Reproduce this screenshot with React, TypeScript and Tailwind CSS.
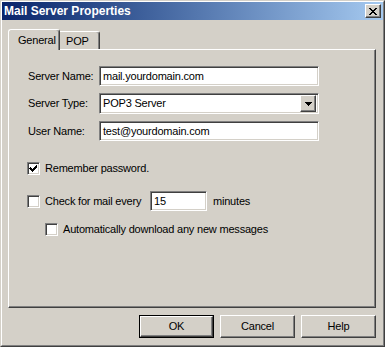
import React from "react";

const sunken =
  "border border-t-[#808080] border-l-[#808080] border-b-white border-r-white shadow-[inset_1px_1px_0_#404040,inset_-1px_-1px_0_#d4d0c8] bg-white";
const raised =
  "border border-t-white border-l-white border-b-[#404040] border-r-[#404040] shadow-[inset_-1px_-1px_0_#808080] bg-[#d4d0c8]";

function CheckBox({ checked }: { checked?: boolean }) {
  return (
    <div className={`w-[13px] h-[13px] shrink-0 ${sunken} flex items-center justify-center`}>
      {checked && (
        <svg width="9" height="9" viewBox="0 0 9 9" shapeRendering="crispEdges">
          <path d="M1 3h1v1h1v1h1v-1h1v-1h1v-1h1v-1h1v3h-1v1h-1v1h-1v1h-1v1h-1v-1h-1v-1h-1v-1h-1z" fill="#000" />
        </svg>
      )}
    </div>
  );
}

function Button({ label, isDefault }: { label: string; isDefault?: boolean }) {
  if (isDefault) {
    return (
      <div className="w-[75px] h-[23px] border border-black flex">
        <div className={`flex-1 ${raised} flex items-center justify-center`}>{label}</div>
      </div>
    );
  }
  return <div className={`w-[75px] h-[23px] ${raised} flex items-center justify-center`}>{label}</div>;
}

export default function App() {
  return (
    <div className="w-[385px] h-[347px] bg-[#d4d0c8] text-black text-[11px] tracking-[-0.2px] leading-none font-['Liberation_Sans',Arial,sans-serif] border border-t-[#d4d0c8] border-l-[#d4d0c8] border-r-[#404040] border-b-[#404040]">
      <div className="w-full h-full border border-t-white border-l-white border-r-[#808080] border-b-[#808080] flex flex-col">
        {/* Caption */}
        <div className="h-[18px] bg-linear-to-r from-[#0a246a] to-[#a6caf0] flex items-center justify-between pl-[2px] pr-[2px] shrink-0">
          <span className="text-white font-bold text-[12px] tracking-normal">Mail Server Properties</span>
          <div className={`w-[16px] h-[14px] ${raised} flex items-center justify-center`}>
            <svg width="8" height="7" viewBox="0 0 8 7" shapeRendering="crispEdges">
              <path d="M0 0h2v1h1v1h2v-1h1v-1h2v1h-1v1h-1v1h-1v1h1v1h1v1h1v1h-2v-1h-1v-1h-2v1h-1v1h-2v-1h1v-1h1v-1h1v-1h-1v-1h-1z" fill="#000" />
            </svg>
          </div>
        </div>

        {/* Body */}
        <div className="pl-[6px] pt-[9px]">
          {/* Tabs */}
          <div className="flex items-end h-[20px]">
            <div className="relative z-10 h-[21px] -mb-px w-[52px] pl-[9px] pt-[5px] bg-[#d4d0c8] border-t border-l border-r border-t-white border-l-white border-r-[#404040] rounded-t-[3px] shadow-[inset_-1px_0_0_#808080]">
              General
            </div>
            <div className="h-[18px] w-[40px] pl-[6px] pt-[4px] bg-[#d4d0c8] border-t border-r border-t-white border-r-[#404040] rounded-tr-[3px] shadow-[inset_-1px_0_0_#808080]">
              POP
            </div>
          </div>

          {/* Panel */}
          <div className="w-[368px] h-[259px] border border-t-white border-l-white border-r-[#404040] border-b-[#404040] shadow-[inset_-1px_-1px_0_#808080] pt-[16px] pl-[18px]">
            <div className="flex flex-col gap-[7px] pl-px">
              <div className="flex items-center h-[20px]">
                <span className="w-[71px]">Server Name:</span>
                <div className={`w-[220px] h-[20px] ${sunken} flex items-center pl-[3px]`}>mail.yourdomain.com</div>
              </div>
              <div className="flex items-center h-[21px]">
                <span className="w-[71px]">Server Type:</span>
                <div className={`w-[220px] h-[21px] ${sunken} flex items-center pl-[3px] pr-[2px]`}>
                  <span className="flex-1">POP3 Server</span>
                  <div className={`w-[16px] h-[17px] ${raised} flex items-center justify-center`}>
                    <svg width="7" height="4" viewBox="0 0 7 4" shapeRendering="crispEdges">
                      <path d="M0 0h7v1h-1v1h-1v1h-1v1h-1v-1h-1v-1h-1v-1h-1z" fill="#000" />
                    </svg>
                  </div>
                </div>
              </div>
              <div className="flex items-center h-[20px]">
                <span className="w-[71px]">User Name:</span>
                <div className={`w-[220px] h-[20px] ${sunken} flex items-center pl-[3px]`}>test@yourdomain.com</div>
              </div>
            </div>

            <div className="flex items-center gap-[5px] mt-[21px] h-[13px]">
              <CheckBox checked />
              <span>Remember password.</span>
            </div>

            <div className="flex items-center mt-[16px] h-[20px]">
              <CheckBox />
              <span className="w-[110px] pl-[5px]">Check for mail every</span>
              <div className={`w-[57px] h-[20px] ${sunken} flex items-center pl-[3px]`}>15</div>
              <span className="pl-[6px]">minutes</span>
            </div>

            <div className="flex items-center gap-[5px] mt-[12px] h-[13px] pl-[18px]">
              <CheckBox />
              <span>Automatically download any new messages</span>
            </div>
          </div>

          {/* Buttons */}
          <div className="w-[368px] flex justify-end gap-[6px] mt-[7px]">
            <Button label="OK" isDefault />
            <Button label="Cancel" />
            <Button label="Help" />
          </div>
        </div>
      </div>
    </div>
  );
}
